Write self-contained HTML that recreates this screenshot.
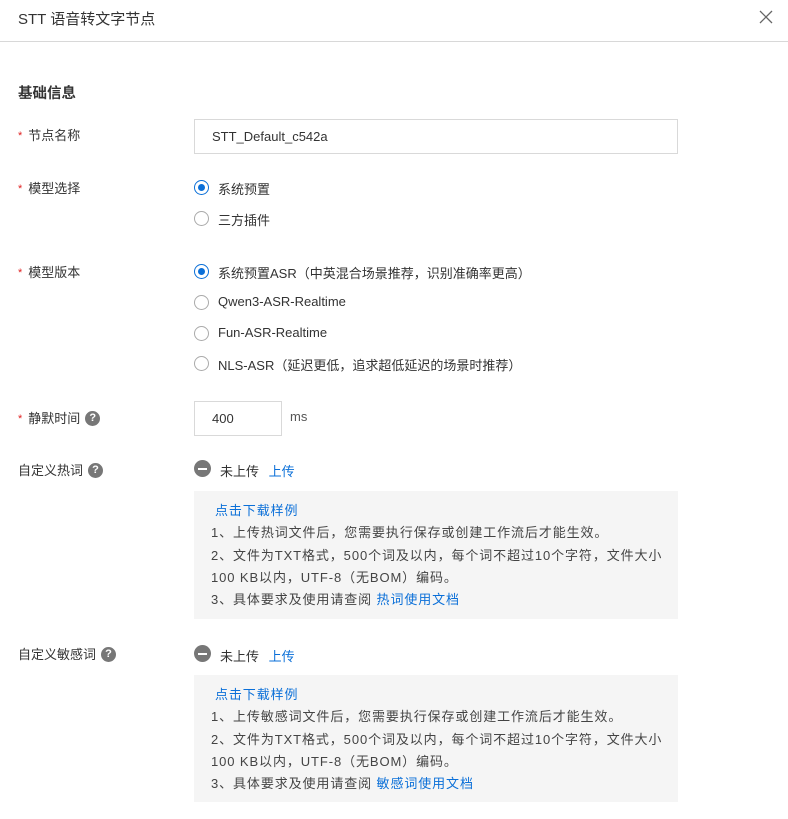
<!DOCTYPE html>
<html><head><meta charset="utf-8"><style>
*{margin:0;padding:0;box-sizing:border-box}
body{width:788px;height:819px;background:#fff;font-family:"Liberation Sans","Noto Sans CJK SC",sans-serif;color:#333;font-size:13px;position:relative;overflow:hidden}
.a{position:absolute;white-space:nowrap}
.hdr{position:absolute;left:0;top:0;width:788px;height:42px;border-bottom:1px solid #d8d8d8}
.lbl{position:absolute;left:18px;color:#333;font-size:13px;line-height:17px}
.req:before{content:"*";color:#e02020;margin-right:6px;font-size:11px;position:relative;top:-1px}
.radio{position:absolute;left:194px;width:15px;height:15px;border:1px solid #aaa;border-radius:50%;background:#fff}
.radio.on{border-color:#0a6fd8}
.radio.on:after{content:"";position:absolute;left:3px;top:3px;width:7px;height:7px;border-radius:50%;background:#0a6fd8}
.rt{position:absolute;left:218px;font-size:13px;color:#333}
.q{display:inline-block;width:15px;height:15px;border-radius:50%;background:#777;color:#fff;font-size:11px;font-weight:bold;text-align:center;line-height:15px;margin-left:5px;vertical-align:top;margin-top:1px}
.inp{position:absolute;border:1px solid #d9d9d9;background:#fff;padding-left:17px;font-size:13px;color:#333}
.box{position:absolute;left:194px;width:484px;background:#f5f5f5;padding:9px 0 0 17px;font-size:13px;letter-spacing:0.9px;line-height:22.3px;color:#444;white-space:nowrap}
.lk{color:#0a6fd8}
.minus{position:absolute;left:194px;width:17px;height:17px;border-radius:50%;background:#777}
.minus:after{content:"";position:absolute;left:4px;top:7.5px;width:9px;height:2px;background:#fff}
</style></head><body>
<div class="hdr"></div>
<div class="a" style="left:18px;top:8px;font-size:15px;color:#333">STT 语音转文字节点</div>
<svg class="a" style="left:759px;top:10px" width="14" height="14" viewBox="0 0 14 14"><path d="M1 1L13 13M13 1L1 13" stroke="#666" stroke-width="1.3"/></svg>

<div class="a" style="left:18px;top:82px;font-size:14.5px;font-weight:bold;color:#333">基础信息</div>

<div class="lbl req" style="top:127px">节点名称</div>
<div class="inp" style="left:194px;top:119px;width:484px;height:35px;line-height:33px">STT_Default_c542a</div>

<div class="lbl req" style="top:180px">模型选择</div>
<div class="radio on" style="top:180px"></div><div class="rt" style="top:179px">系统预置</div>
<div class="radio" style="top:211px"></div><div class="rt" style="top:210px">三方插件</div>

<div class="lbl req" style="top:264px">模型版本</div>
<div class="radio on" style="top:264px"></div><div class="rt" style="top:263px">系统预置ASR（中英混合场景推荐，识别准确率更高）</div>
<div class="radio" style="top:295px"></div><div class="rt" style="top:294px">Qwen3-ASR-Realtime</div>
<div class="radio" style="top:326px"></div><div class="rt" style="top:325px">Fun-ASR-Realtime</div>
<div class="radio" style="top:356px"></div><div class="rt" style="top:355px">NLS-ASR（延迟更低，追求超低延迟的场景时推荐）</div>

<div class="lbl req" style="top:410px">静默时间<span class="q">?</span></div>
<div class="inp" style="left:194px;top:401px;width:88px;height:35px;line-height:33px">400</div>
<div class="a" style="left:290px;top:409px;color:#555">ms</div>

<div class="lbl" style="top:462px">自定义热词<span class="q">?</span></div>
<div class="minus" style="top:460px"></div>
<div class="a" style="left:220px;top:461px">未上传 <span class="lk" style="margin-left:6px">上传</span></div>
<div class="box" style="top:491px;height:128px">
<div class="lk" style="padding-left:4px">点击下载样例</div>
<div>1、上传热词文件后，您需要执行保存或创建工作流后才能生效。</div>
<div>2、文件为TXT格式，500个词及以内，每个词不超过10个字符，文件大小</div>
<div>100 KB以内，UTF-8（无BOM）编码。</div>
<div>3、具体要求及使用请查阅 <span class="lk">热词使用文档</span></div>
</div>

<div class="lbl" style="top:646px">自定义敏感词<span class="q">?</span></div>
<div class="minus" style="top:645px"></div>
<div class="a" style="left:220px;top:646px">未上传 <span class="lk" style="margin-left:6px">上传</span></div>
<div class="box" style="top:675px;height:127px">
<div class="lk" style="padding-left:4px">点击下载样例</div>
<div>1、上传敏感词文件后，您需要执行保存或创建工作流后才能生效。</div>
<div>2、文件为TXT格式，500个词及以内，每个词不超过10个字符，文件大小</div>
<div>100 KB以内，UTF-8（无BOM）编码。</div>
<div>3、具体要求及使用请查阅 <span class="lk">敏感词使用文档</span></div>
</div>
</body></html>
